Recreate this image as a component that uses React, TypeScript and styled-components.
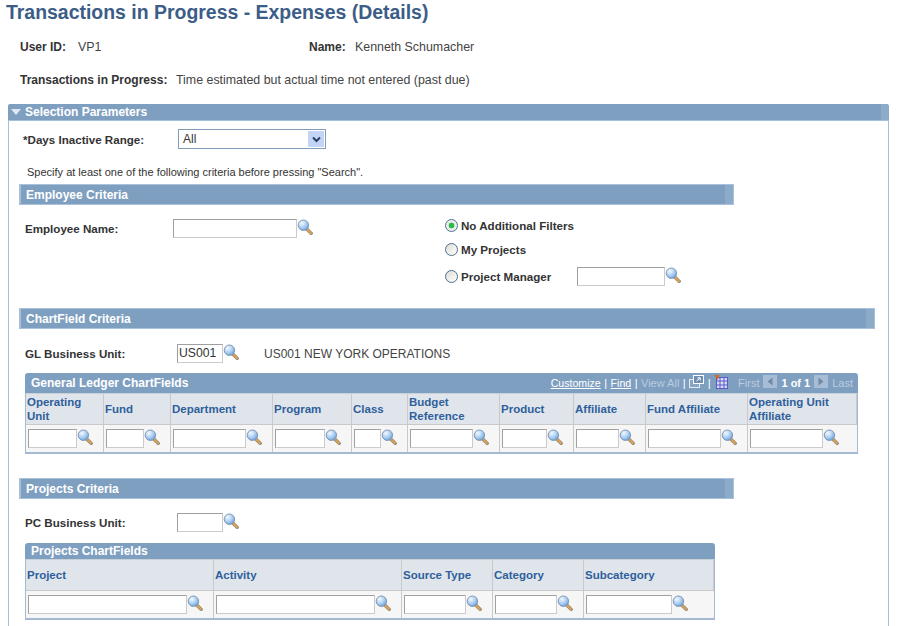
import React from "react";
import styled, { createGlobalStyle } from "styled-components";

const Global = createGlobalStyle`
  html, body { margin: 0; padding: 0; height: 626px; overflow: hidden; background: #fff; }
  body { font-family: "Liberation Sans", Arial, sans-serif; font-size: 12px; color: #333; }
`;

const Page = styled.div`
  width: 902px;
  height: 626px;
  overflow: hidden;
`;
const Title = styled.h1`
  margin: 0;
  padding-left: 6px;
  height: 24px;
  line-height: 24px;
  font-size: 19.45px;
  font-weight: bold;
  color: #3b5d87;
  white-space: nowrap;
`;
const InfoRow = styled.div<{ $top: number }>`
  display: flex;
  align-items: center;
  height: 16px;
  margin-top: ${(p) => p.$top}px;
  padding-left: 20px;
`;
const InfoLabel = styled.span<{ $w: number }>`
  width: ${(p) => p.$w}px;
  flex: none;
  font-weight: bold;
  color: #333;
`;
const InfoValue = styled.span<{ $w?: number }>`
  ${(p) => (p.$w ? `width: ${p.$w}px; flex: none;` : "")}
  font-size: 12.4px;
  color: #444;
`;
const Panel = styled.section`
  margin: 16px 0 0 8px;
  width: 881px;
  box-sizing: border-box;
`;
const PanelHeader = styled.div`
  position: relative;
  display: flex;
  align-items: center;
  height: 16px;
  background: #7f9fc1;
  border-radius: 2px 3px 0 0;
  color: #fff;
  font-weight: bold;
  font-size: 12px;
  gap: 4px;
  padding-left: 3px;
  &::after {
    content: "";
    position: absolute;
    right: 0;
    top: 0;
    bottom: 0;
    width: 8px;
    background: #8dabc9;
    border-radius: 0 3px 0 0;
  }
`;
const PanelBody = styled.div`
  border-left: 1px solid #a3c0de;
  border-right: 1px solid #a3c0de;
  border-top: 1px solid #a3c0de;
  padding: 8px 0 60px 10px;
`;
const DaysRow = styled.div`
  display: flex;
  align-items: center;
  height: 20px;
  padding-left: 4px;
`;
const Label = styled.label<{ $w: number }>`
  width: ${(p) => p.$w}px;
  flex: none;
  font-weight: bold;
  font-size: 11.6px;
  color: #333;
`;
const SelectBox = styled.div`
  width: 148px;
  height: 20px;
  box-sizing: border-box;
  border: 1px solid #7f9db9;
  display: flex;
  align-items: center;
  justify-content: space-between;
  padding: 1px 1px 1px 4px;
  color: #333;
`;
const SelectBtn = styled.span`
  width: 16px;
  height: 16px;
  background: #c4d4f6;
  display: flex;
  align-items: center;
  justify-content: center;
  border-radius: 1px;
`;
const Note = styled.div`
  margin: 16px 0 0 8px;
  height: 14px;
  line-height: 14px;
  font-size: 11px;
  color: #333;
`;
const Bar = styled.div<{ $w: number; $top: number }>`
  position: relative;
  box-sizing: border-box;
  width: ${(p) => p.$w}px;
  height: 21px;
  margin-top: ${(p) => p.$top}px;
  display: flex;
  align-items: center;
  padding-left: 7px;
  background: #7f9fc1;
  border-top: 1px solid #a9c1da;
  border-bottom: 1px solid #a9c1da;
  color: #fff;
  font-weight: bold;
  font-size: 12px;
  &::before {
    content: "";
    position: absolute;
    left: 0;
    top: 0;
    bottom: 0;
    width: 2px;
    background: #a9bfd8;
  }
  &::after {
    content: "";
    position: absolute;
    right: 0;
    top: 0;
    bottom: 0;
    width: 8px;
    background: #8cabc9;
    border-right: 1px solid #a9c1da;
  }
`;
const TwoCols = styled.div`
  display: flex;
  margin-top: 8px;
  height: 78px;
`;
const LeftCol = styled.div`
  width: 426px;
  flex: none;
  padding: 6px 0 0 6px;
  box-sizing: border-box;
`;
const Field = styled.div<{ $top?: number; $left?: number }>`
  display: flex;
  align-items: center;
  margin-top: ${(p) => p.$top ?? 0}px;
  padding-left: ${(p) => p.$left ?? 0}px;
`;
const RadioCol = styled.div`
  display: flex;
  flex-direction: column;
`;
const RadioRow = styled.div<{ $h: number }>`
  display: flex;
  align-items: center;
  height: ${(p) => p.$h}px;
`;
const Radio = styled.span<{ $on?: boolean }>`
  width: 13px;
  height: 13px;
  box-sizing: border-box;
  flex: none;
  border: 1px solid #4e6f8f;
  border-radius: 50%;
  margin-right: 3px;
  background: ${(p) =>
    p.$on
      ? "radial-gradient(circle, #2fb84a 0 2.6px, #e6ece6 3.2px, #f6f6f2 100%)"
      : "linear-gradient(135deg, #dcdcd6, #ffffff)"};
`;
const RadioLabel = styled.span<{ $w?: number }>`
  font-weight: bold;
  font-size: 11.6px;
  color: #333;
  ${(p) => (p.$w ? `width: ${p.$w}px; flex: none;` : "")}
`;
const TextInput = styled.div<{ $w: number; $h?: number }>`
  width: ${(p) => p.$w}px;
  height: ${(p) => p.$h ?? 19}px;
  box-sizing: border-box;
  flex: none;
  background: #fff;
  border: 1px solid;
  border-color: #a0a0a0 #cbcbcb #cbcbcb #a0a0a0;
  padding: 1px 0 1px 1px;
  font-size: 12.2px;
  line-height: 14px;
  color: #333;
`;
const LookupSvg = styled.svg`
  width: 16px;
  height: 16px;
  flex: none;
  margin: -3px 0 0 0;
`;
const GlRow = styled.div`
  display: flex;
  align-items: center;
  margin-top: 15px;
  padding-left: 6px;
`;
const GlText = styled.span`
  margin-left: 25px;
  color: #444;
`;
const Grid = styled.div<{ $w: number; $top: number }>`
  width: ${(p) => p.$w}px;
  margin: ${(p) => p.$top}px 0 0 6px;
`;
const GridHead = styled.div<{ $h: number }>`
  position: relative;
  display: flex;
  align-items: center;
  justify-content: space-between;
  height: ${(p) => p.$h}px;
  padding: 0 5px 0 6px;
  background: #7f9fc1;
  border-radius: 3px 3px 0 0;
  color: #fff;
  font-weight: bold;
  font-size: 12px;
`;
const Nav = styled.div`
  display: flex;
  align-items: center;
  font-size: 11px;
  font-weight: normal;
  color: #fff;
  white-space: nowrap;
`;
const NavLink = styled.span`
  font-size: 10.6px;
  text-decoration: underline;
  font-weight: normal;
`;
const NavSep = styled.span`
  margin: 0 3.5px;
`;
const NavDim = styled.span<{ $l?: number }>`
  color: #bccbdd;
  margin-left: ${(p) => p.$l ?? 0}px;
`;
const NavCount = styled.span`
  font-weight: bold;
  font-size: 11px;
  margin: 0 4px;
`;
const NavSvg = styled.svg<{ $l?: number }>`
  flex: none;
  margin: -3px 0 0 ${(p) => p.$l ?? 0}px;
`;
const NavGap = styled.span`
  width: 4px;
`;
const ArrowSvg = styled.svg`
  flex: none;
  margin-top: -3px;
`;
const Table = styled.div<{ $cols: number[] }>`
  display: grid;
  grid-template-columns: ${(p) => p.$cols.map((c) => c + "px").join(" ")};
  border: 1px solid #a4bad2;
  border-bottom-width: 2px;
  border-top: 1px solid #c8d0d8;
`;
const HeadCell = styled.div`
  box-sizing: border-box;
  height: 31px;
  display: flex;
  align-items: center;
  padding: 0 1px;
  background: #dfe5eb;
  border-right: 1px solid #c9c9c9;
  border-bottom: 1px solid #c9c9c9;
  color: #2f5f9c;
  font-weight: bold;
  font-size: 11.5px;
  line-height: 14px;
`;
const BodyCell = styled.div`
  box-sizing: border-box;
  height: 27px;
  display: flex;
  align-items: center;
  padding-left: 2px;
  background: #f6f6f6;
  border-right: 1px solid #c9c9c9;
  &:last-child { border-right: none; }
`;

const Lookup = () => (
  <LookupSvg viewBox="0 0 16 16">
    <defs>
      <radialGradient id="lg" cx="0.35" cy="0.3" r="0.8">
        <stop offset="0" stopColor="#f4f9ff" />
        <stop offset="0.55" stopColor="#a9cdf2" />
        <stop offset="1" stopColor="#5f98d6" />
      </radialGradient>
    </defs>
    <path d="M10 10.2 L14.2 14.4" stroke="#8a8a80" strokeWidth="3.4" strokeLinecap="round" />
    <path d="M10.6 10.8 L14 14.2" stroke="#e0a050" strokeWidth="2" strokeLinecap="round" />
    <circle cx="6.4" cy="6.2" r="5.2" fill="url(#lg)" stroke="#7e98b2" strokeWidth="1" />
  </LookupSvg>
);

const Arrow = ({ dir }: { dir: "l" | "r" }) => (
  <ArrowSvg width="14" height="13" viewBox="0 0 14 13">
    <rect width="14" height="13" fill="#a7bdd6" />
    <path d={dir === "l" ? "M9.5 2.5 L4.5 6.5 L9.5 10.5Z" : "M4.5 2.5 L9.5 6.5 L4.5 10.5Z"} fill="#6d8aa9" />
  </ArrowSvg>
);

type Col = { title: string; input: number };

const DataGrid = ({ cols, widths }: { cols: Col[]; widths: number[] }) => (
  <Table $cols={widths}>
    {cols.map((c) => (
      <HeadCell key={c.title}>{c.title}</HeadCell>
    ))}
    {cols.map((c) => (
      <BodyCell key={c.title}>
        <TextInput $w={c.input} />
        <Lookup />
      </BodyCell>
    ))}
  </Table>
);

const glCols: Col[] = [
  { title: "Operating Unit", input: 49 },
  { title: "Fund", input: 38 },
  { title: "Department", input: 73 },
  { title: "Program", input: 50 },
  { title: "Class", input: 27 },
  { title: "Budget Reference", input: 63 },
  { title: "Product", input: 45 },
  { title: "Affiliate", input: 43 },
  { title: "Fund Affiliate", input: 73 },
  { title: "Operating Unit Affiliate", input: 73 },
];
const glWidths = [78, 67, 102, 79, 56, 92, 74, 72, 102, 109];

const pcCols: Col[] = [
  { title: "Project", input: 159 },
  { title: "Activity", input: 159 },
  { title: "Source Type", input: 62 },
  { title: "Category", input: 62 },
  { title: "Subcategory", input: 86 },
];
const pcWidths = [188, 188, 91, 91, 130];

export default function App() {
  return (
    <Page>
      <Global />
      <Title>Transactions in Progress - Expenses (Details)</Title>
      <InfoRow $top={15}>
        <InfoLabel $w={58}>User ID:</InfoLabel>
        <InfoValue $w={231}>VP1</InfoValue>
        <InfoLabel $w={46}>Name:</InfoLabel>
        <InfoValue>Kenneth Schumacher</InfoValue>
      </InfoRow>
      <InfoRow $top={17}>
        <InfoLabel $w={156}>Transactions in Progress:</InfoLabel>
        <InfoValue>Time estimated but actual time not entered (past due)</InfoValue>
      </InfoRow>
      <Panel>
        <PanelHeader>
          <svg width="10" height="6" viewBox="0 0 10 6">
            <path d="M0 0 H10 L5 6Z" fill="#dfe8f2" />
          </svg>
          Selection Parameters
        </PanelHeader>
        <PanelBody>
          <DaysRow>
            <Label $w={155}>*Days Inactive Range:</Label>
            <SelectBox>
              All
              <SelectBtn>
                <svg width="9" height="7" viewBox="0 0 9 7">
                  <path d="M1 1.5 L4.5 5 L8 1.5" fill="none" stroke="#2a3f68" strokeWidth="2" />
                </svg>
              </SelectBtn>
            </SelectBox>
          </DaysRow>
          <Note>Specify at least one of the following criteria before pressing "Search".</Note>
          <Bar $w={715} $top={5}>Employee Criteria</Bar>
          <TwoCols>
            <LeftCol>
              <Field>
                <Label $w={148}>Employee Name:</Label>
                <TextInput $w={124} />
                <Lookup />
              </Field>
            </LeftCol>
            <RadioCol>
              <RadioRow $h={24}>
                <Radio $on />
                <RadioLabel>No Additional Filters</RadioLabel>
              </RadioRow>
              <RadioRow $h={24}>
                <Radio />
                <RadioLabel>My Projects</RadioLabel>
              </RadioRow>
              <RadioRow $h={30}>
                <Radio />
                <RadioLabel $w={116}>Project Manager</RadioLabel>
                <TextInput $w={88} />
                <Lookup />
              </RadioRow>
            </RadioCol>
          </TwoCols>
          <Bar $w={856} $top={17}>ChartField Criteria</Bar>
          <GlRow>
            <Label $w={152}>GL Business Unit:</Label>
            <TextInput $w={46}>US001</TextInput>
            <Lookup />
            <GlText>US001 NEW YORK OPERATIONS</GlText>
          </GlRow>
          <Grid $w={833} $top={10}>
            <GridHead $h={20}>
              General Ledger ChartFields
              <Nav>
                <NavLink>Customize</NavLink>
                <NavSep>|</NavSep>
                <NavLink>Find</NavLink>
                <NavSep>|</NavSep>
                <NavDim>View All</NavDim>
                <NavSep>|</NavSep>
                <NavSvg width="15" height="13" viewBox="0 0 15 13">
                  <rect x="0.5" y="4.5" width="10" height="8" fill="#8aa6c4" stroke="#e4ecf4" />
                  <rect x="4.5" y="0.5" width="10" height="8" fill="#6f8fb2" stroke="#fff" />
                  <path d="M7.5 6 L11 3 M8.5 2.8 H11.2 V5.5" fill="none" stroke="#fff" />
                </NavSvg>
                <NavSep>|</NavSep>
                <NavSvg width="14" height="14" viewBox="0 0 14 14">
                  <rect x="2.5" y="2.5" width="11" height="11" fill="#d8dcf8" stroke="#5a5ac8" />
                  <path d="M6 2.5 V13.5 M10 2.5 V13.5 M2.5 6 H13.5 M2.5 10 H13.5" stroke="#5a5ac8" />
                  <path d="M0 0 H5 L4 5 Z" fill="#d8681c" />
                </NavSvg>
                <NavDim $l={10}>First</NavDim>
                <NavGap />
                <Arrow dir="l" />
                <NavCount>1 of 1</NavCount>
                <Arrow dir="r" />
                <NavDim $l={4}>Last</NavDim>
              </Nav>
            </GridHead>
            <DataGrid cols={glCols} widths={glWidths} />
          </Grid>
          <Bar $w={715} $top={24}>Projects Criteria</Bar>
          <Field $top={14} $left={6}>
            <Label $w={152}>PC Business Unit:</Label>
            <TextInput $w={46} />
            <Lookup />
          </Field>
          <Grid $w={690} $top={11}>
            <GridHead $h={16}>Projects ChartFields</GridHead>
            <DataGrid cols={pcCols} widths={pcWidths} />
          </Grid>
        </PanelBody>
      </Panel>
    </Page>
  );
}
